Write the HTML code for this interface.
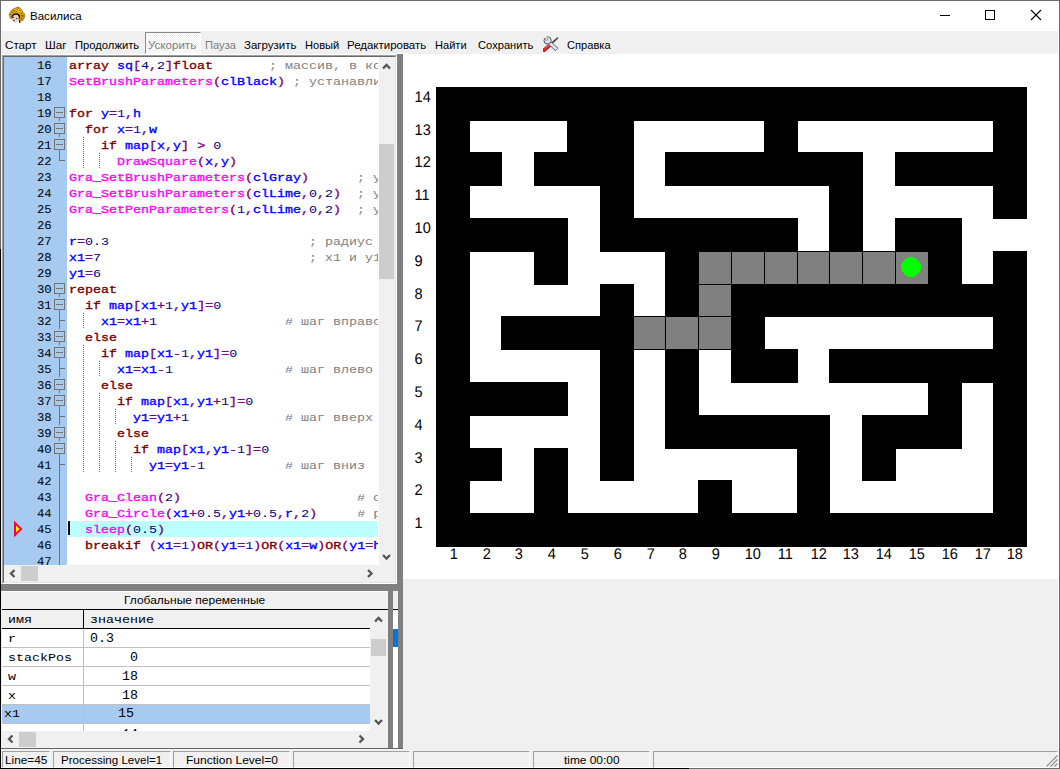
<!DOCTYPE html>
<html lang="ru"><head><meta charset="utf-8"><title>Василиса</title>
<style>
*{box-sizing:border-box;margin:0;padding:0}
html,body{width:1060px;height:769px;overflow:hidden;background:#fff}
body{position:relative;font-family:"Liberation Sans",sans-serif;font-size:11.5px;color:#000}
.a{position:absolute}
.t{position:absolute;white-space:pre;transform-origin:0 0;line-height:14px;height:14px}
.m{font-family:"Liberation Mono",monospace;font-size:11.8px;line-height:16px;white-space:pre}
.x{position:absolute;transform:scaleX(1.1298);transform-origin:0 0;height:16px}
.xr{position:absolute;font-size:11.8px;text-rendering:geometricPrecision;transform:scaleX(1.04);transform-origin:100% 0;height:16px;text-align:right}
.xd{position:absolute;font-size:12.4px;transform:scaleX(1.0751);transform-origin:0 0;height:16px}
.ln{position:absolute;left:0;height:16px;width:100%}
.k{color:#800000;-webkit-text-stroke:0.35px #800000}
.f{color:#ff00ff;-webkit-text-stroke:0.35px #ff00ff}
.i{color:#0000ff;-webkit-text-stroke:0.35px #0000ff}
.o{color:#800080;-webkit-text-stroke:0.35px #800080}
.n{color:#000080}
.c{color:#808080}
.g{fill:none;stroke:#727272;stroke-width:1;shape-rendering:crispEdges}
</style></head>
<body>
<div class="a" style="left:0px;top:0px;width:1060px;height:769px;background:#fff;"></div>
<div class="a" style="left:1px;top:31px;width:1057px;height:23px;background:#f0f0f0;"></div>
<div class="a" style="left:1px;top:55px;width:402px;height:696px;background:#f0f0f0;"></div>
<div class="a" style="left:403px;top:579px;width:655px;height:172px;background:#f0f0f0;"></div>
<div class="a" style="left:1px;top:749px;width:1058px;height:18px;background:#f0f0f0;"></div>
<svg class="a" style="left:9px;top:7px" width="16" height="16" viewBox="0 0 16 16" overflow="visible">
<path d="M0.2 8.5 C0.3 6.5 1.2 5 2 4.2 C2.8 2.6 4.5 1.4 6.3 1.1 C7.5 0.3 8.8 -0.1 9.6 0.2 C10.8 0.6 11.8 1.6 12.4 2.4 C13.4 3.3 14 4.4 14.2 5.4 C15.4 6.3 16 7.4 15.9 8.6 C15.9 10 15.4 11 15 11.7 C14.6 13 13.6 14 12.6 14.1 C11.8 14.2 11 13.9 10.6 13.5 L10.2 9 C9 7 6 6.5 4 8 C3 9 2.6 10.6 2.6 12.2 C1.4 11.6 0.4 10.2 0.2 8.5 Z" fill="#d49a10" stroke="#7a5206" stroke-width="0.5"/>
<path d="M4.5 2.6 C6 1.6 8.6 1 10.4 1.8 C12 2.6 13 4 13.2 5.6 C11.6 4.6 10.2 4.8 9 5.6 C8 4.4 6 3.6 4.5 2.6Z" fill="#eeba16"/>
<path d="M1 8 C1.4 6.4 2.4 5.4 3.6 5 C3 6.2 2.8 7.4 2.8 8.6 C2 9.4 1.4 9 1 8Z" fill="#e6ac14"/>
<g fill="#6e4604"><circle cx="5.4" cy="3.4" r="0.6"/><circle cx="8.2" cy="2.6" r="0.6"/><circle cx="10.8" cy="3.4" r="0.6"/><circle cx="9.4" cy="0.9" r="0.6"/><circle cx="12.4" cy="6" r="0.6"/><circle cx="12.8" cy="8.8" r="0.9"/><circle cx="14.6" cy="9" r="0.6"/><circle cx="12.6" cy="11.8" r="0.7"/><circle cx="1.6" cy="7.4" r="0.6"/><circle cx="3.2" cy="5.2" r="0.5"/><circle cx="7.4" cy="4.6" r="0.5"/></g>
<path d="M2.8 10.5 C3 8 5 6.8 7 7 C9 7.2 10 8.6 10 10.6 C10 12.6 9 15 7 15.8 C5.8 16.2 4.6 15.6 4 14.6 C3.2 13.4 2.7 12 2.8 10.5Z" fill="#eed2c4"/>
<path d="M3 9.8 C4 7.4 6.6 6.6 8.4 7.2 C9.6 7.6 10.2 8.6 10.3 9.6" fill="none" stroke="#1a1410" stroke-width="1.5"/>
<path d="M7.2 7.8 C8.6 8 9.6 9.2 9.6 11.6 L8.8 11.2 C8.6 9.8 8 8.6 7.2 7.8Z" fill="#e6d690"/>
<path d="M2.6 10.6 L5 10.4" stroke="#2a1a10" stroke-width="0.9"/>
<ellipse cx="7.6" cy="11.5" rx="0.75" ry="0.55" fill="#0a0a0a"/>
<path d="M4 13.4 L6 13.4" stroke="#701010" stroke-width="0.9"/>
<path d="M10.3 8.4 L10.4 14 L11 16" stroke="#15120e" stroke-width="1.1" fill="none"/>
<circle cx="10.6" cy="12.4" r="0.7" fill="#d49a10"/>
</svg>
<div class="t" style="left:30.20px;top:9px;color:#000;font-size:11.5px;transform:scaleX(1.0035)">Василиса</div>
<svg class="a" style="left:930px;top:1px" width="128" height="30" viewBox="0 0 128 30" shape-rendering="crispEdges">
<rect x="10" y="14" width="10" height="1" fill="#000"/>
<rect x="55.5" y="9.5" width="9" height="9" fill="none" stroke="#000" stroke-width="1"/>
<path d="M101 9 L111 19 M111 9 L101 19" stroke="#000" stroke-width="1.1" shape-rendering="geometricPrecision"/>
</svg>
<div class="t" style="left:5.00px;top:38px;color:#000;font-size:11.5px;transform:scaleX(1.0112)">Старт</div>
<div class="t" style="left:45.00px;top:38px;color:#000;font-size:11.5px;transform:scaleX(1.0222)">Шаг</div>
<div class="t" style="left:75.00px;top:38px;color:#000;font-size:11.5px;transform:scaleX(0.9766)">Продолжить</div>
<div class="a" style="left:145px;top:32px;width:56px;height:22px;background:#f8f8f8;border:1px solid;border-color:#8a8a8a #fff #fff #8a8a8a;background:repeating-conic-gradient(#fff 0 25%,#f0f0f0 0 50%) 0 0/2px 2px"></div>
<div class="t" style="left:148.40px;top:38px;color:#7d7d7d;font-size:11.5px;transform:scaleX(1.0058)">Ускорить</div>
<div class="t" style="left:205.00px;top:38px;color:#7d7d7d;font-size:11.5px;transform:scaleX(0.9703)">Пауза</div>
<div class="t" style="left:243.80px;top:38px;color:#000;font-size:11.5px;transform:scaleX(0.9979)">Загрузить</div>
<div class="t" style="left:304.80px;top:38px;color:#000;font-size:11.5px;transform:scaleX(0.9634)">Новый</div>
<div class="t" style="left:347.00px;top:38px;color:#000;font-size:11.5px;transform:scaleX(0.9970)">Редактировать</div>
<div class="t" style="left:435.00px;top:38px;color:#000;font-size:11.5px;transform:scaleX(0.9628)">Найти</div>
<div class="t" style="left:477.80px;top:38px;color:#000;font-size:11.5px;transform:scaleX(0.9694)">Сохранить</div>
<div class="t" style="left:567.00px;top:38px;color:#000;font-size:11.5px;transform:scaleX(0.9665)">Справка</div>
<svg class="a" style="left:543px;top:36px" width="16" height="16" viewBox="0 0 16 16">
<path d="M9.2 6.8 L14.6 2" stroke="#3a3a3a" stroke-width="1.6" stroke-linecap="round"/>
<path d="M13.2 2.2 L15 1.2 L14.4 3.2Z" fill="#777"/>
<path d="M1.2 14.2 L7.6 8.4" stroke="#8a1a10" stroke-width="3.6" stroke-linecap="round"/>
<path d="M1.3 14.1 L7.4 8.6" stroke="#e8202a" stroke-width="2.3" stroke-linecap="round"/>
<path d="M2.4 12.2 L5.8 8.8" stroke="#ff9a9a" stroke-width="0.8" stroke-linecap="round"/>
<path d="M5.5 6 L14 13.6" stroke="#6a6a72" stroke-width="4.2" stroke-linecap="butt"/>
<path d="M5.5 6 L13.6 13.2" stroke="#dfe6f2" stroke-width="2.6" stroke-linecap="butt"/>
<circle cx="4.6" cy="4.4" r="3.6" fill="#e4e9f2" stroke="#55555c" stroke-width="1"/>
<path d="M0.4 1.2 L4.6 4.4 L3.2 -0.4 Z" fill="#f0f0f0"/>
<circle cx="3.6" cy="3.4" r="1.1" fill="#f4f4f4" stroke="#666" stroke-width="0.7"/>
</svg>
<div class="a" style="left:2px;top:55px;width:395px;height:529px;border:1px solid;border-color:#a0a0a0 #fff #fff #a0a0a0;background:#fff"><div class="a" style="left:0;top:0;width:393px;height:527px;border:1px solid;border-color:#696969 #e3e3e3 #e3e3e3 #696969;overflow:hidden"><div class="a m" style="left:0;top:0;width:374px;height:508px;overflow:hidden;background:#fff"><div class="a" style="left:0;top:0;width:63px;height:508px;background:#a6caf0"></div><div class="xr" style="left:16px;top:1px;width:31.7px">16</div><div class="x" style="left:65px;top:1px"><span class="k">array</span> <span class="i">sq</span><span class="o">[</span><span class="n">4</span><span class="o">,</span><span class="n">2</span><span class="o">]</span><span class="k">float</span>       <span class="c">; массив, в котором хранятся координаты</span></div><div class="xr" style="left:16px;top:17px;width:31.7px">17</div><div class="x" style="left:65px;top:17px"><span class="f">SetBrushParameters</span><span class="o">(</span><span class="i">clBlack</span><span class="o">)</span> <span class="c">; устанавливаем цвет кисти</span></div><div class="xr" style="left:16px;top:33px;width:31.7px">18</div><div class="xr" style="left:16px;top:49px;width:31.7px">19</div><div class="x" style="left:65px;top:49px"><span class="k">for</span> <span class="i">y</span><span class="o">=</span><span class="n">1</span><span class="o">,</span><span class="i">h</span></div><div class="xr" style="left:16px;top:65px;width:31.7px">20</div><div class="x" style="left:65px;top:65px">  <span class="k">for</span> <span class="i">x</span><span class="o">=</span><span class="n">1</span><span class="o">,</span><span class="i">w</span></div><div class="xr" style="left:16px;top:81px;width:31.7px">21</div><div class="x" style="left:65px;top:81px">    <span class="k">if</span> <span class="i">map</span><span class="o">[</span><span class="i">x</span><span class="o">,</span><span class="i">y</span><span class="o">]</span> <span class="o">&gt;</span> <span class="n">0</span></div><div class="a" style="left:79px;top:80px;width:1px;height:16px;background:repeating-linear-gradient(#808080 0 1px,transparent 1px 2px)"></div><div class="xr" style="left:16px;top:97px;width:31.7px">22</div><div class="x" style="left:65px;top:97px">      <span class="f">DrawSquare</span><span class="o">(</span><span class="i">x</span><span class="o">,</span><span class="i">y</span><span class="o">)</span></div><div class="a" style="left:79px;top:96px;width:1px;height:16px;background:repeating-linear-gradient(#808080 0 1px,transparent 1px 2px)"></div><div class="a" style="left:95px;top:96px;width:1px;height:16px;background:repeating-linear-gradient(#808080 0 1px,transparent 1px 2px)"></div><div class="xr" style="left:16px;top:113px;width:31.7px">23</div><div class="x" style="left:65px;top:113px"><span class="f">Gra_SetBrushParameters</span><span class="o">(</span><span class="i">clGray</span><span class="o">)</span>      <span class="c">; устанавливаем</span></div><div class="xr" style="left:16px;top:129px;width:31.7px">24</div><div class="x" style="left:65px;top:129px"><span class="f">Gra_SetBrushParameters</span><span class="o">(</span><span class="i">clLime</span><span class="o">,</span><span class="n">0</span><span class="o">,</span><span class="n">2</span><span class="o">)</span>  <span class="c">; устанавливаем</span></div><div class="xr" style="left:16px;top:145px;width:31.7px">25</div><div class="x" style="left:65px;top:145px"><span class="f">Gra_SetPenParameters</span><span class="o">(</span><span class="n">1</span><span class="o">,</span><span class="i">clLime</span><span class="o">,</span><span class="n">0</span><span class="o">,</span><span class="n">2</span><span class="o">)</span>  <span class="c">; устанавливаем</span></div><div class="xr" style="left:16px;top:161px;width:31.7px">26</div><div class="xr" style="left:16px;top:177px;width:31.7px">27</div><div class="x" style="left:65px;top:177px"><span class="i">r</span><span class="o">=</span><span class="n">0.3</span>                         <span class="c">; радиус</span></div><div class="xr" style="left:16px;top:193px;width:31.7px">28</div><div class="x" style="left:65px;top:193px"><span class="i">x1</span><span class="o">=</span><span class="n">7</span>                          <span class="c">; x1 и y1 - координаты</span></div><div class="xr" style="left:16px;top:209px;width:31.7px">29</div><div class="x" style="left:65px;top:209px"><span class="i">y1</span><span class="o">=</span><span class="n">6</span></div><div class="xr" style="left:16px;top:225px;width:31.7px">30</div><div class="x" style="left:65px;top:225px"><span class="k">repeat</span></div><div class="xr" style="left:16px;top:241px;width:31.7px">31</div><div class="x" style="left:65px;top:241px">  <span class="k">if</span> <span class="i">map</span><span class="o">[</span><span class="i">x1</span><span class="o">+</span><span class="n">1</span><span class="o">,</span><span class="i">y1</span><span class="o">]</span><span class="o">=</span><span class="n">0</span></div><div class="xr" style="left:16px;top:257px;width:31.7px">32</div><div class="x" style="left:65px;top:257px">    <span class="i">x1</span><span class="o">=</span><span class="i">x1</span><span class="o">+</span><span class="n">1</span>                <span class="c"># шаг вправо</span></div><div class="a" style="left:79px;top:256px;width:1px;height:16px;background:repeating-linear-gradient(#808080 0 1px,transparent 1px 2px)"></div><div class="xr" style="left:16px;top:273px;width:31.7px">33</div><div class="x" style="left:65px;top:273px">  <span class="k">else</span></div><div class="xr" style="left:16px;top:289px;width:31.7px">34</div><div class="x" style="left:65px;top:289px">    <span class="k">if</span> <span class="i">map</span><span class="o">[</span><span class="i">x1</span><span class="o">-</span><span class="n">1</span><span class="o">,</span><span class="i">y1</span><span class="o">]</span><span class="o">=</span><span class="n">0</span></div><div class="a" style="left:79px;top:288px;width:1px;height:16px;background:repeating-linear-gradient(#808080 0 1px,transparent 1px 2px)"></div><div class="xr" style="left:16px;top:305px;width:31.7px">35</div><div class="x" style="left:65px;top:305px">      <span class="i">x1</span><span class="o">=</span><span class="i">x1</span><span class="o">-</span><span class="n">1</span>              <span class="c"># шаг влево</span></div><div class="a" style="left:79px;top:304px;width:1px;height:16px;background:repeating-linear-gradient(#808080 0 1px,transparent 1px 2px)"></div><div class="a" style="left:95px;top:304px;width:1px;height:16px;background:repeating-linear-gradient(#808080 0 1px,transparent 1px 2px)"></div><div class="xr" style="left:16px;top:321px;width:31.7px">36</div><div class="x" style="left:65px;top:321px">    <span class="k">else</span></div><div class="a" style="left:79px;top:320px;width:1px;height:16px;background:repeating-linear-gradient(#808080 0 1px,transparent 1px 2px)"></div><div class="xr" style="left:16px;top:337px;width:31.7px">37</div><div class="x" style="left:65px;top:337px">      <span class="k">if</span> <span class="i">map</span><span class="o">[</span><span class="i">x1</span><span class="o">,</span><span class="i">y1</span><span class="o">+</span><span class="n">1</span><span class="o">]</span><span class="o">=</span><span class="n">0</span></div><div class="a" style="left:79px;top:336px;width:1px;height:16px;background:repeating-linear-gradient(#808080 0 1px,transparent 1px 2px)"></div><div class="a" style="left:95px;top:336px;width:1px;height:16px;background:repeating-linear-gradient(#808080 0 1px,transparent 1px 2px)"></div><div class="xr" style="left:16px;top:353px;width:31.7px">38</div><div class="x" style="left:65px;top:353px">        <span class="i">y1</span><span class="o">=</span><span class="i">y1</span><span class="o">+</span><span class="n">1</span>            <span class="c"># шаг вверх</span></div><div class="a" style="left:79px;top:352px;width:1px;height:16px;background:repeating-linear-gradient(#808080 0 1px,transparent 1px 2px)"></div><div class="a" style="left:95px;top:352px;width:1px;height:16px;background:repeating-linear-gradient(#808080 0 1px,transparent 1px 2px)"></div><div class="a" style="left:111px;top:352px;width:1px;height:16px;background:repeating-linear-gradient(#808080 0 1px,transparent 1px 2px)"></div><div class="xr" style="left:16px;top:369px;width:31.7px">39</div><div class="x" style="left:65px;top:369px">      <span class="k">else</span></div><div class="a" style="left:79px;top:368px;width:1px;height:16px;background:repeating-linear-gradient(#808080 0 1px,transparent 1px 2px)"></div><div class="a" style="left:95px;top:368px;width:1px;height:16px;background:repeating-linear-gradient(#808080 0 1px,transparent 1px 2px)"></div><div class="xr" style="left:16px;top:385px;width:31.7px">40</div><div class="x" style="left:65px;top:385px">        <span class="k">if</span> <span class="i">map</span><span class="o">[</span><span class="i">x1</span><span class="o">,</span><span class="i">y1</span><span class="o">-</span><span class="n">1</span><span class="o">]</span><span class="o">=</span><span class="n">0</span></div><div class="a" style="left:79px;top:384px;width:1px;height:16px;background:repeating-linear-gradient(#808080 0 1px,transparent 1px 2px)"></div><div class="a" style="left:95px;top:384px;width:1px;height:16px;background:repeating-linear-gradient(#808080 0 1px,transparent 1px 2px)"></div><div class="a" style="left:111px;top:384px;width:1px;height:16px;background:repeating-linear-gradient(#808080 0 1px,transparent 1px 2px)"></div><div class="xr" style="left:16px;top:401px;width:31.7px">41</div><div class="x" style="left:65px;top:401px">          <span class="i">y1</span><span class="o">=</span><span class="i">y1</span><span class="o">-</span><span class="n">1</span>          <span class="c"># шаг вниз</span></div><div class="a" style="left:79px;top:400px;width:1px;height:16px;background:repeating-linear-gradient(#808080 0 1px,transparent 1px 2px)"></div><div class="a" style="left:95px;top:400px;width:1px;height:16px;background:repeating-linear-gradient(#808080 0 1px,transparent 1px 2px)"></div><div class="a" style="left:111px;top:400px;width:1px;height:16px;background:repeating-linear-gradient(#808080 0 1px,transparent 1px 2px)"></div><div class="a" style="left:127px;top:400px;width:1px;height:16px;background:repeating-linear-gradient(#808080 0 1px,transparent 1px 2px)"></div><div class="xr" style="left:16px;top:417px;width:31.7px">42</div><div class="xr" style="left:16px;top:433px;width:31.7px">43</div><div class="x" style="left:65px;top:433px">  <span class="f">Gra_Clean</span><span class="o">(</span><span class="n">2</span><span class="o">)</span>                      <span class="c"># стираем</span></div><div class="xr" style="left:16px;top:449px;width:31.7px">44</div><div class="x" style="left:65px;top:449px">  <span class="f">Gra_Circle</span><span class="o">(</span><span class="i">x1</span><span class="o">+</span><span class="n">0.5</span><span class="o">,</span><span class="i">y1</span><span class="o">+</span><span class="n">0.5</span><span class="o">,</span><span class="i">r</span><span class="o">,</span><span class="n">2</span><span class="o">)</span>     <span class="c"># рисуем</span></div><div class="a" style="left:65px;top:464px;width:309px;height:16px;background:#bcffff"></div><div class="a" style="left:64px;top:464px;width:2px;height:14px;background:#000"></div><div class="xr" style="left:16px;top:465px;width:31.7px">45</div><div class="x" style="left:65px;top:465px">  <span class="f">sleep</span><span class="o">(</span><span class="n">0.5</span><span class="o">)</span></div><div class="xr" style="left:16px;top:481px;width:31.7px">46</div><div class="x" style="left:65px;top:481px">  <span class="k">breakif</span> <span class="o">(</span><span class="i">x1</span><span class="o">=</span><span class="n">1</span><span class="o">)</span><span class="k">OR</span><span class="o">(</span><span class="i">y1</span><span class="o">=</span><span class="n">1</span><span class="o">)</span><span class="k">OR</span><span class="o">(</span><span class="i">x1</span><span class="o">=</span><span class="i">w</span><span class="o">)</span><span class="k">OR</span><span class="o">(</span><span class="i">y1</span><span class="o">=</span><span class="i">h</span><span class="o">)</span></div><div class="xr" style="left:16px;top:497px;width:31.7px">47</div>
<svg class="a" style="left:0;top:0" width="63" height="508" viewBox="0 0 63 508"><rect class="g" x="50.5" y="50.5" width="10" height="10"/><path class="g" d="M52 55.5 H59"/><path class="g" d="M55.5 61 V64"/><rect class="g" x="50.5" y="66.5" width="10" height="10"/><path class="g" d="M52 71.5 H59"/><path class="g" d="M55.5 77 V80"/><rect class="g" x="50.5" y="82.5" width="10" height="10"/><path class="g" d="M52 87.5 H59"/><path class="g" d="M55.5 93 V96"/><rect class="g" x="50.5" y="226.5" width="10" height="10"/><path class="g" d="M52 231.5 H59"/><path class="g" d="M55.5 237 V240"/><rect class="g" x="50.5" y="242.5" width="10" height="10"/><path class="g" d="M52 247.5 H59"/><path class="g" d="M55.5 253 V256"/><rect class="g" x="50.5" y="274.5" width="10" height="10"/><path class="g" d="M52 279.5 H59"/><path class="g" d="M55.5 285 V288"/><rect class="g" x="50.5" y="290.5" width="10" height="10"/><path class="g" d="M52 295.5 H59"/><path class="g" d="M55.5 301 V304"/><rect class="g" x="50.5" y="322.5" width="10" height="10"/><path class="g" d="M52 327.5 H59"/><path class="g" d="M55.5 333 V336"/><rect class="g" x="50.5" y="338.5" width="10" height="10"/><path class="g" d="M52 343.5 H59"/><path class="g" d="M55.5 349 V352"/><rect class="g" x="50.5" y="370.5" width="10" height="10"/><path class="g" d="M52 375.5 H59"/><path class="g" d="M55.5 381 V384"/><rect class="g" x="50.5" y="386.5" width="10" height="10"/><path class="g" d="M52 391.5 H59"/><path class="g" d="M55.5 397 V400"/><path class="g" d="M55.5 256 V272"/><path class="g" d="M55.5 263.5 H61"/><path class="g" d="M55.5 304 V320"/><path class="g" d="M55.5 311.5 H61"/><path class="g" d="M55.5 352 V368"/><path class="g" d="M55.5 359.5 H61"/><path class="g" d="M55.5 400 V416"/><path class="g" d="M55.5 407.5 H61"/><path class="g" d="M55.5 96 V103.5 H61"/><path class="g" d="M55.5 416 V508"/></svg>
<svg class="a" style="left:9px;top:464px" width="12" height="16" viewBox="0 0 12 16"><path d="M2 2 L8 8 L2 14 Z" fill="#ffff00" stroke="#ff0040" stroke-width="2" stroke-linejoin="miter"/></svg>
</div><div class="a" style="left:375px;top:0;width:16px;height:508px;background:#f0f0f0"></div><div class="a" style="left:375px;top:87px;width:15px;height:135px;background:#cdcdcd"></div><svg class="a" style="left:375px;top:0" width="16" height="508" viewBox="0 0 16 508"><path d="M4 11.5 L7.5 8 L11 11.5" fill="none" stroke="#555" stroke-width="2.3"/><path d="M4 498 L7.5 501.5 L11 498" fill="none" stroke="#555" stroke-width="2.3"/></svg><div class="a" style="left:0;top:508px;width:391px;height:17px;background:#f0f0f0"></div><div class="a" style="left:17px;top:509px;width:17px;height:15px;background:#cdcdcd"></div><svg class="a" style="left:0;top:508px" width="391" height="18" viewBox="0 0 391 18"><path d="M10.5 5 L7 8.5 L10.5 12" fill="none" stroke="#555" stroke-width="2.3"/><path d="M364 5 L367.5 8.5 L364 12" fill="none" stroke="#555" stroke-width="2.3"/></svg></div></div>
<div class="a" style="left:397px;top:53px;width:6px;height:1px;background:#fff;"></div>
<div class="a" style="left:397px;top:54px;width:6px;height:695px;background:#808080;"></div>
<div class="a" style="left:1px;top:584px;width:402px;height:7px;background:#808080;"></div>
<div class="a" style="left:1px;top:591px;width:387px;height:1px;background:#fff;"></div>
<div class="a" style="left:388px;top:591px;width:5px;height:158px;background:#808080;"></div>
<div class="a" style="left:393px;top:591px;width:5px;height:18px;background:#f0f0f0;"></div>
<div class="a" style="left:393px;top:609px;width:5px;height:139px;background:#fff;"></div>
<div class="a" style="left:393px;top:609px;width:5px;height:1px;background:#000;"></div>
<div class="a" style="left:393px;top:629px;width:5px;height:18px;background:#0078d7;"></div>
<div class="a" style="left:1px;top:748px;width:402px;height:1px;background:#696969;"></div>
<div class="t" style="left:124.20px;top:593px;color:#000;font-size:11.5px;transform:scaleX(1.0419)">Глобальные переменные</div>
<div class="a m" style="left:2px;top:609px;width:386px;height:139px;background:#fff;overflow:hidden"><div class="a" style="left:0;top:0;width:368px;height:20px;background:#f0f0f0;border-top:1px solid #000;border-bottom:1px solid #000"></div><div class="a" style="left:81px;top:0;width:1px;height:20px;background:#000"></div><div class="x" style="left:6px;top:3px">имя</div><div class="x" style="left:88px;top:3px">значение</div><div class="a" style="left:0;top:38px;width:368px;height:1px;background:#c0c0c0"></div><div class="x" style="left:6px;top:22px">r</div><div class="xd" style="left:88px;top:22px">0.3</div><div class="a" style="left:0;top:57px;width:368px;height:1px;background:#c0c0c0"></div><div class="x" style="left:6px;top:41px">stackPos</div><div class="xd" style="left:128px;top:41px">0</div><div class="a" style="left:0;top:76px;width:368px;height:1px;background:#c0c0c0"></div><div class="x" style="left:6px;top:60px">w</div><div class="xd" style="left:120px;top:60px">18</div><div class="a" style="left:0;top:95px;width:368px;height:1px;background:#c0c0c0"></div><div class="x" style="left:6px;top:79px">x</div><div class="xd" style="left:120px;top:79px">18</div><div class="a" style="left:0;top:96px;width:368px;height:18px;background:#a6caf0"></div><div class="a" style="left:0;top:114px;width:368px;height:1px;background:#c0c0c0"></div><div class="x" style="left:2px;top:97px">x1</div><div class="xd" style="left:116px;top:97px">15</div><div class="a" style="left:0;top:133px;width:368px;height:1px;background:#c0c0c0"></div><div class="x" style="left:6px;top:120px">y1</div><div class="xd" style="left:120px;top:118px">14</div><div class="a" style="left:81px;top:20px;width:1px;height:119px;background:#c0c0c0"></div><div class="a" style="left:368px;top:0;width:18px;height:122px;background:#f0f0f0;border-top:1px solid #000"></div><div class="a" style="left:369px;top:30px;width:15px;height:17px;background:#cdcdcd"></div><svg class="a" style="left:368px;top:0" width="18" height="122" viewBox="0 0 18 122"><path d="M5 12.5 L8.5 9 L12 12.5" fill="none" stroke="#555" stroke-width="2.3"/><path d="M5 111 L8.5 114.5 L12 111" fill="none" stroke="#555" stroke-width="2.3"/></svg><div class="a" style="left:0;top:122px;width:386px;height:17px;background:#f0f0f0"></div><div class="a" style="left:17px;top:123px;width:17px;height:15px;background:#cdcdcd"></div><svg class="a" style="left:0;top:122px" width="386" height="17" viewBox="0 0 386 17"><path d="M10.5 4.5 L7 8 L10.5 11.5" fill="none" stroke="#555" stroke-width="2.3"/><path d="M357.5 4.5 L361 8 L357.5 11.5" fill="none" stroke="#555" stroke-width="2.3"/></svg></div>
<div class="a" style="left:2px;top:751px;width:48px;height:17px;background:#f0f0f0;border:1px solid;border-color:#a0a0a0 #fff #fff #a0a0a0"></div>
<div class="a" style="left:53px;top:751px;width:118px;height:17px;background:#f0f0f0;border:1px solid;border-color:#a0a0a0 #fff #fff #a0a0a0"></div>
<div class="a" style="left:173px;top:751px;width:117px;height:17px;background:#f0f0f0;border:1px solid;border-color:#a0a0a0 #fff #fff #a0a0a0"></div>
<div class="a" style="left:293px;top:751px;width:117px;height:17px;background:#f0f0f0;border:1px solid;border-color:#a0a0a0 #fff #fff #a0a0a0"></div>
<div class="a" style="left:413px;top:751px;width:117px;height:17px;background:#f0f0f0;border:1px solid;border-color:#a0a0a0 #fff #fff #a0a0a0"></div>
<div class="a" style="left:533px;top:751px;width:117px;height:17px;background:#f0f0f0;border:1px solid;border-color:#a0a0a0 #fff #fff #a0a0a0"></div>
<div class="a" style="left:653px;top:751px;width:405px;height:17px;background:#f0f0f0;border:1px solid;border-color:#a0a0a0 #fff #fff #a0a0a0"></div>
<div class="t" style="left:5.10px;top:753px;color:#000;font-size:11.5px;transform:scaleX(1.0279)">Line=45</div>
<div class="t" style="left:60.70px;top:753px;color:#000;font-size:11.5px;transform:scaleX(1.0051)">Processing Level=1</div>
<div class="t" style="left:185.70px;top:753px;color:#000;font-size:11.5px;transform:scaleX(1.0454)">Function Level=0</div>
<div class="t" style="left:564.40px;top:753px;color:#000;font-size:11.5px;transform:scaleX(1.0335)">time 00:00</div>
<svg class="a" style="left:1045px;top:754px" width="13" height="13" viewBox="0 0 13 13"><path d="M1.5 12.5 L12.5 1.5 M5.5 12.5 L12.5 5.5 M9.5 12.5 L12.5 9.5" stroke="#8a8a8a" stroke-width="1.1"/></svg>
<svg class="a" style="left:403px;top:54px" width="655" height="525" viewBox="403 54 655 525" shape-rendering="crispEdges"><rect x="436" y="87" width="591" height="34" fill="#000"/><rect x="436" y="120" width="34" height="33" fill="#000"/><rect x="567" y="120" width="67" height="33" fill="#000"/><rect x="764" y="120" width="34" height="33" fill="#000"/><rect x="993" y="120" width="34" height="33" fill="#000"/><rect x="436" y="152" width="66" height="34" fill="#000"/><rect x="534" y="152" width="100" height="34" fill="#000"/><rect x="665" y="152" width="198" height="34" fill="#000"/><rect x="895" y="152" width="132" height="34" fill="#000"/><rect x="436" y="185" width="34" height="34" fill="#000"/><rect x="600" y="185" width="34" height="34" fill="#000"/><rect x="829" y="185" width="34" height="34" fill="#000"/><rect x="993" y="185" width="34" height="34" fill="#000"/><rect x="436" y="218" width="132" height="34" fill="#000"/><rect x="600" y="218" width="198" height="34" fill="#000"/><rect x="829" y="218" width="34" height="34" fill="#000"/><rect x="895" y="218" width="67" height="34" fill="#000"/><rect x="436" y="251" width="34" height="34" fill="#000"/><rect x="534" y="251" width="34" height="34" fill="#000"/><rect x="665" y="251" width="34" height="34" fill="#000"/><rect x="928" y="251" width="34" height="34" fill="#000"/><rect x="993" y="251" width="34" height="34" fill="#000"/><rect x="436" y="284" width="34" height="33" fill="#000"/><rect x="600" y="284" width="34" height="33" fill="#000"/><rect x="665" y="284" width="34" height="33" fill="#000"/><rect x="731" y="284" width="296" height="33" fill="#000"/><rect x="436" y="316" width="34" height="34" fill="#000"/><rect x="501" y="316" width="133" height="34" fill="#000"/><rect x="731" y="316" width="34" height="34" fill="#000"/><rect x="993" y="316" width="34" height="34" fill="#000"/><rect x="436" y="349" width="34" height="34" fill="#000"/><rect x="600" y="349" width="34" height="34" fill="#000"/><rect x="665" y="349" width="34" height="34" fill="#000"/><rect x="731" y="349" width="67" height="34" fill="#000"/><rect x="829" y="349" width="198" height="34" fill="#000"/><rect x="436" y="382" width="132" height="34" fill="#000"/><rect x="600" y="382" width="34" height="34" fill="#000"/><rect x="665" y="382" width="34" height="34" fill="#000"/><rect x="928" y="382" width="34" height="34" fill="#000"/><rect x="993" y="382" width="34" height="34" fill="#000"/><rect x="436" y="415" width="34" height="34" fill="#000"/><rect x="600" y="415" width="34" height="34" fill="#000"/><rect x="665" y="415" width="165" height="34" fill="#000"/><rect x="862" y="415" width="100" height="34" fill="#000"/><rect x="993" y="415" width="34" height="34" fill="#000"/><rect x="436" y="448" width="66" height="33" fill="#000"/><rect x="534" y="448" width="34" height="33" fill="#000"/><rect x="600" y="448" width="34" height="33" fill="#000"/><rect x="797" y="448" width="33" height="33" fill="#000"/><rect x="862" y="448" width="34" height="33" fill="#000"/><rect x="993" y="448" width="34" height="33" fill="#000"/><rect x="436" y="480" width="34" height="34" fill="#000"/><rect x="534" y="480" width="34" height="34" fill="#000"/><rect x="698" y="480" width="34" height="34" fill="#000"/><rect x="797" y="480" width="33" height="34" fill="#000"/><rect x="993" y="480" width="34" height="34" fill="#000"/><rect x="436" y="513" width="591" height="34" fill="#000"/><rect x="633.5" y="316.5" width="32" height="33" fill="#808080" stroke="#000" stroke-width="1"/><rect x="665.5" y="316.5" width="33" height="33" fill="#808080" stroke="#000" stroke-width="1"/><rect x="698.5" y="316.5" width="33" height="33" fill="#808080" stroke="#000" stroke-width="1"/><rect x="698.5" y="284.5" width="33" height="32" fill="#808080" stroke="#000" stroke-width="1"/><rect x="698.5" y="251.5" width="33" height="33" fill="#808080" stroke="#000" stroke-width="1"/><rect x="731.5" y="251.5" width="33" height="33" fill="#808080" stroke="#000" stroke-width="1"/><rect x="764.5" y="251.5" width="33" height="33" fill="#808080" stroke="#000" stroke-width="1"/><rect x="797.5" y="251.5" width="32" height="33" fill="#808080" stroke="#000" stroke-width="1"/><rect x="829.5" y="251.5" width="33" height="33" fill="#808080" stroke="#000" stroke-width="1"/><rect x="862.5" y="251.5" width="33" height="33" fill="#808080" stroke="#000" stroke-width="1"/><rect x="895.5" y="251.5" width="33" height="33" fill="#808080" stroke="#000" stroke-width="1"/><circle cx="911" cy="267" r="10" fill="#00ff00"/><g font-family='"Liberation Sans", sans-serif' font-size="15.4" fill="#000" shape-rendering="auto" text-rendering="geometricPrecision"><text transform="translate(414.6,528) scale(0.945,1)">1</text><text transform="translate(414.6,495) scale(0.945,1)">2</text><text transform="translate(414.6,463) scale(0.945,1)">3</text><text transform="translate(414.6,430) scale(0.945,1)">4</text><text transform="translate(414.6,397) scale(0.945,1)">5</text><text transform="translate(414.6,364) scale(0.945,1)">6</text><text transform="translate(414.6,331) scale(0.945,1)">7</text><text transform="translate(414.6,299) scale(0.945,1)">8</text><text transform="translate(414.6,266) scale(0.945,1)">9</text><text transform="translate(414.6,233) scale(0.945,1)">10</text><text transform="translate(414.6,200) scale(0.945,1)">11</text><text transform="translate(414.6,167) scale(0.945,1)">12</text><text transform="translate(414.6,135) scale(0.945,1)">13</text><text transform="translate(414.6,102) scale(0.945,1)">14</text><text transform="translate(449.7,559) scale(0.945,1)">1</text><text transform="translate(482.7,559) scale(0.945,1)">2</text><text transform="translate(514.7,559) scale(0.945,1)">3</text><text transform="translate(547.7,559) scale(0.945,1)">4</text><text transform="translate(580.7,559) scale(0.945,1)">5</text><text transform="translate(613.7,559) scale(0.945,1)">6</text><text transform="translate(646.7,559) scale(0.945,1)">7</text><text transform="translate(678.7,559) scale(0.945,1)">8</text><text transform="translate(711.7,559) scale(0.945,1)">9</text><text transform="translate(744.7,559) scale(0.945,1)">10</text><text transform="translate(777.7,559) scale(0.945,1)">11</text><text transform="translate(810.7,559) scale(0.945,1)">12</text><text transform="translate(842.7,559) scale(0.945,1)">13</text><text transform="translate(875.7,559) scale(0.945,1)">14</text><text transform="translate(908.7,559) scale(0.945,1)">15</text><text transform="translate(941.7,559) scale(0.945,1)">16</text><text transform="translate(974.7,559) scale(0.945,1)">17</text><text transform="translate(1006.7,559) scale(0.945,1)">18</text></g></svg>
<div class="a" style="left:0;top:0;width:1060px;height:769px;border:1px solid #6b6b6b;pointer-events:none"></div>
<div class="a" style="left:0px;top:249px;width:1px;height:520px;background:#000;"></div>
<div class="a" style="left:0px;top:768px;width:689px;height:1px;background:#000;"></div>
</body></html>
